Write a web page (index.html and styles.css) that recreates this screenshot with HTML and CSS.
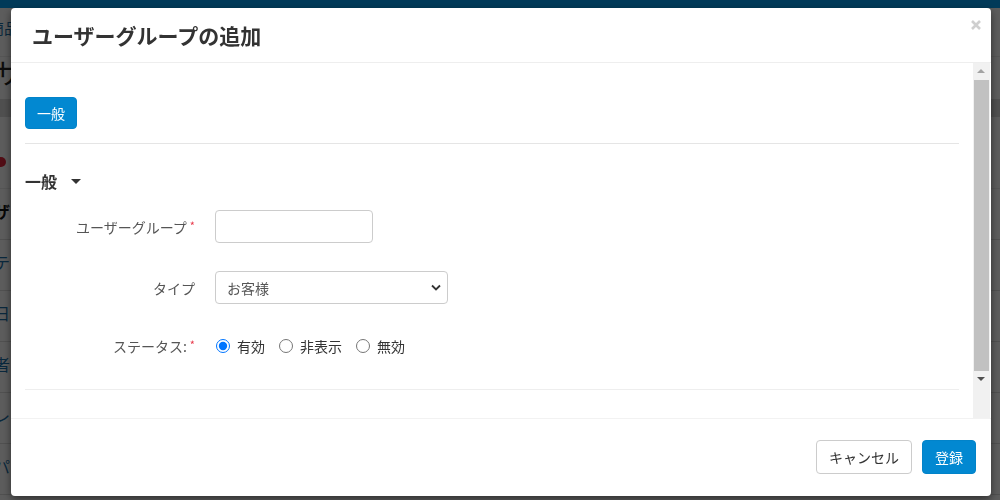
FILE: index.html
```html
<!DOCTYPE html>
<html lang="ja">
<head>
    <meta charset="UTF-8">
    <meta name="viewport" content="width=device-width, initial-scale=1.0">
    <title>ユーザーグループ</title>
    <link rel="stylesheet" href="styles.css">
</head>
<body>
    <!-- page behind the dialog -->
    <div class="page">
        <div class="topbar"></div>
        <div class="crumb">商品</div>
        <div class="page-title">サ</div>
        <div class="toolbar"></div>
        <div class="filter"><span class="dot"></span></div>
        <div class="row head">ザ</div>
        <div class="row"><a href="#">テ</a></div>
        <div class="row"><a href="#">日</a></div>
        <div class="row"><a href="#">者</a></div>
        <div class="row"><a href="#">レ</a></div>
        <div class="row"><a href="#">パ</a></div>
    </div>

    <div class="backdrop"></div>

    <div class="modal">
        <div class="modal-header">
            <h2>ユーザーグループの追加</h2>
            <svg class="close" width="10" height="10" viewBox="0 0 10 10">
                <path d="M1 1l8 8M9 1l-8 8" stroke="#cfcfcf" stroke-width="2.6"/>
            </svg>
        </div>

        <div class="modal-body">
            <div class="modal-content">
                <button class="btn btn-primary tab-btn">一般</button>
                <hr>
                <h3 class="section-title">一般 <span class="caret"></span></h3>

                <form class="form">
                    <div class="form-row">
                        <label>ユーザーグループ<span class="req">*</span></label>
                        <input type="text" class="input-short">
                    </div>
                    <div class="form-row">
                        <label>タイプ</label>
                        <div class="select-wrap">
                            <select>
                                <option>お客様</option>
                            </select>
                            <svg class="chevron" width="10" height="7" viewBox="0 0 10 7">
                                <path d="M1 1.5l4 4 4-4" fill="none" stroke="#333" stroke-width="1.8"/>
                            </svg>
                        </div>
                    </div>
                    <div class="form-row">
                        <label>ステータス:<span class="req">*</span></label>
                        <div class="radios">
                            <label class="radio"><input type="radio" name="status" checked> 有効</label>
                            <label class="radio"><input type="radio" name="status"> 非表示</label>
                            <label class="radio"><input type="radio" name="status"> 無効</label>
                        </div>
                    </div>
                </form>
                <hr class="end-line">
            </div>

            <!-- scrollbar -->
            <div class="scrollbar">
                <div class="arrow up"></div>
                <div class="thumb"></div>
                <div class="arrow down"></div>
            </div>
        </div>

        <div class="modal-footer">
            <button class="btn btn-default">キャンセル</button>
            <button class="btn btn-primary">登録</button>
        </div>
    </div>
</body>
</html>
```

FILE: styles.css
```css
body {
    margin: 0;
    padding: 0;
    font-family: "Noto Sans CJK JP", "Noto Sans", sans-serif;
    font-size: 14px;
    color: #333;
    background: #fff;
    overflow: hidden;
}

/* page behind the dialog */
.page {
    width: 1000px;
    height: 500px;
}
.topbar {
    height: 8px;
    background-color: #04a2f6;
}
.crumb {
    height: 49px;
    padding-top: 10px;
    box-sizing: border-box;
    font-size: 15px;
    line-height: 20px;
    color: #1a6fa8;
    border-bottom: 1px solid #ececec;
    margin-left: -11px;
}
.page-title {
    height: 42px;
    font-size: 28px;
    line-height: 30px;
    color: #222;
    margin-left: -6px;
}
.toolbar {
    height: 18px;
    background-color: #dcdcdc;
}
.filter {
    height: 72px;
    box-sizing: border-box;
    padding-top: 40px;
    border-bottom: 1px solid #ececec;
}
.row {
    height: 51px;
    box-sizing: border-box;
    padding-bottom: 6px;
    border-bottom: 1px solid #ddd;
    display: flex;
    align-items: center;
    font-size: 16px;
    margin-left: -6px;
}
.row a {
    color: #1a6fa8;
    text-decoration: none;
}
.row.head {
    font-weight: bold;
    color: #111;
}
.dot {
    display: block;
    width: 10px;
    height: 10px;
    border-radius: 50%;
    background: #e0243a;
    margin-left: -4px;
}

.backdrop {
    position: fixed;
    top: 0;
    left: 0;
    right: 0;
    bottom: 0;
    background-color: rgba(0, 0, 0, 0.64);
}

/* dialog */
.modal {
    position: fixed;
    left: 11px;
    top: 8px;
    width: 980px;
    height: 488px;
    background-color: #fff;
    border-radius: 4px;
    box-shadow: 0 3px 9px rgba(0, 0, 0, 0.5);
    display: flex;
    flex-direction: column;
}
.modal-header {
    height: 54px;
    padding: 0 10px 0 21px;
    border-bottom: 1px solid #eee;
    display: flex;
    align-items: center;
    justify-content: space-between;
}
.modal-header h2 {
    margin: 0;
    font-size: 21px;
    font-weight: bold;
    color: #333;
}
.close {
    align-self: flex-start;
    margin-top: 12px;
}

.modal-body {
    height: 355px;
    display: flex;
    overflow: hidden;
    border-bottom: 1px solid #f2f2f2;
}
.modal-content {
    flex: 1;
    padding: 34px 14px 0 14px;
}
.scrollbar {
    width: 17px;
    margin-right: 1px;
    background-color: #f1f1f1;
    display: flex;
    flex-direction: column;
}
.arrow {
    height: 17px;
    position: relative;
}
.arrow::after {
    content: "";
    position: absolute;
    left: 4px;
    top: 6px;
    border-left: 4px solid transparent;
    border-right: 4px solid transparent;
}
.arrow.up::after {
    border-bottom: 4px solid #a3a3a3;
}
.arrow.down::after {
    border-top: 4px solid #505050;
}
.thumb {
    height: 291px;
    margin: 0 1px;
    background-color: #c1c1c1;
}

hr {
    border: none;
    border-top: 1px solid #e5e5e5;
    margin: 14px 0 0 0;
}
.end-line {
    margin-top: 27px;
    border-top-color: #eee;
}

.btn {
    font-family: "Noto Sans CJK JP", "Noto Sans", sans-serif;
    font-size: 14px;
    border-radius: 4px;
    cursor: pointer;
    padding: 0 12px;
    height: 34px;
}
.btn-primary {
    background-color: #0288d1;
    border: 1px solid #0283c9;
    color: #fff;
}
.btn-default {
    background-color: #fff;
    border: 1px solid #ccc;
    color: #333;
}
.tab-btn {
    height: 32px;
    width: 52px;
    padding: 0;
}

.section-title {
    margin: 25px 0 0 0;
    font-size: 16px;
    font-weight: bold;
    line-height: 24px;
    display: flex;
    align-items: center;
}
.caret {
    margin-left: 14px;
    border-left: 5px solid transparent;
    border-right: 5px solid transparent;
    border-top: 5px solid #333;
}

.form {
    margin-top: 17px;
}
.form-row {
    display: flex;
    align-items: center;
    height: 33px;
    margin-bottom: 28px;
}
.form-row:nth-child(2) {
    margin-bottom: 25px;
}
.form-row:last-child {
    margin-bottom: 0;
}
.form-row > label {
    width: 170px;
    text-align: right;
    padding-right: 20px;
    color: #555;
    font-size: 14px;
}
.req {
    color: #e8394b;
    font-size: 11px;
    vertical-align: top;
    margin-left: 3px;
}
.input-short {
    width: 158px;
    height: 33px;
    box-sizing: border-box;
    border: 1px solid #ccc;
    border-radius: 4px;
}
.select-wrap {
    position: relative;
}
.select-wrap select {
    appearance: none;
    width: 233px;
    height: 33px;
    box-sizing: border-box;
    border: 1px solid #ccc;
    border-radius: 4px;
    background: #fff;
    padding: 0 11px;
    font-family: "Noto Sans CJK JP", "Noto Sans", sans-serif;
    font-size: 14px;
    color: #555;
}
.chevron {
    position: absolute;
    right: 7px;
    top: 13px;
}
.radios {
    display: flex;
    gap: 13px;
}
.radio {
    display: flex;
    align-items: center;
    color: #333;
    font-size: 14px;
}
.radio input {
    margin: 0 7px 0 1px;
    width: 14px;
    height: 14px;
}

.modal-footer {
    flex: 1;
    display: flex;
    justify-content: flex-end;
    align-items: flex-start;
    gap: 10px;
    padding: 21px 15px 0 0;
}
.modal-footer .btn-default {
    width: 96px;
}
.modal-footer .btn-primary {
    width: 54px;
    padding: 0;
}
```
